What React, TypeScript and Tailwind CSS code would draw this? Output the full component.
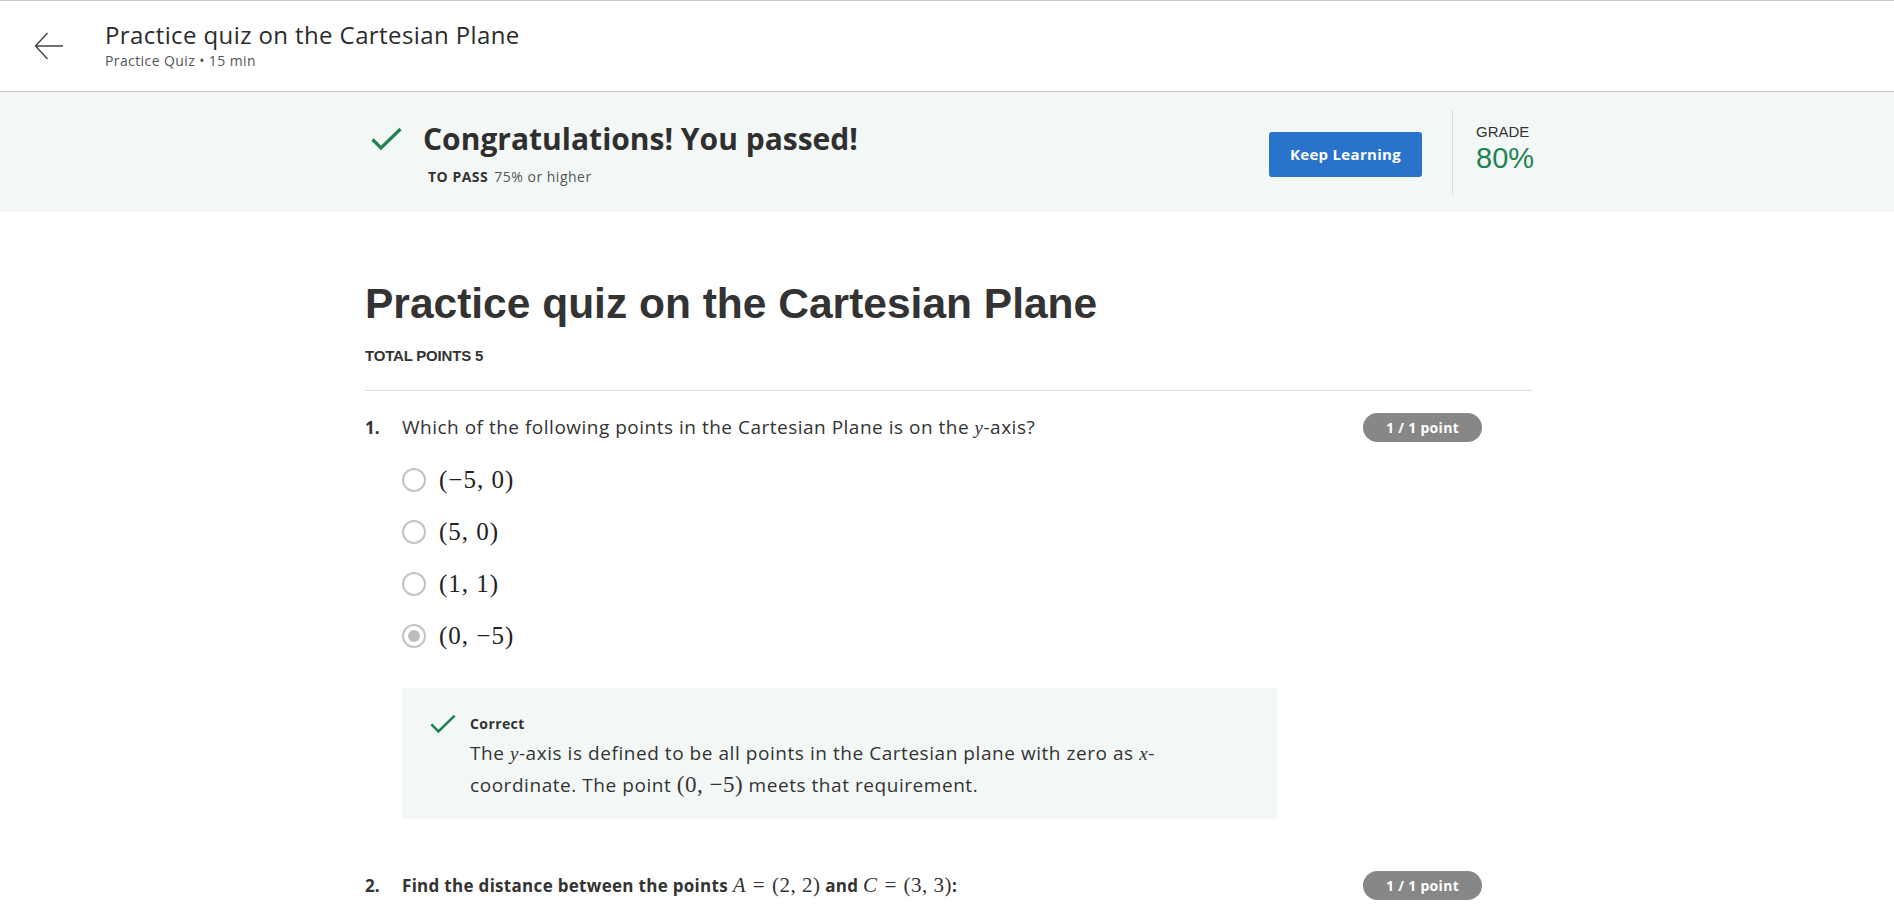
import React from "react";

const sans = { fontFamily: '"Open Sans", "Noto Sans", sans-serif' };

function Check({ className }: { className?: string }) {
  return (
    <svg viewBox="0 0 32 24" className={className} fill="none">
      <path d="M2 12.5 L10.5 21 L30 2" stroke="#1f8354" strokeWidth="3.2" />
    </svg>
  );
}

function M({ children }: { children: React.ReactNode }) {
  return (
    <span className="font-['Liberation_Serif',serif] not-italic tracking-[0.5px]">{children}</span>
  );
}

function V({ children }: { children: React.ReactNode }) {
  return <span className="font-['Liberation_Serif',serif] italic">{children}</span>;
}

function Eq() {
  return <span className="mx-[7px] font-['Liberation_Serif',serif]">=</span>;
}

function Pill() {
  return (
    <span className="mr-[50px] flex h-[29px] w-[119px] shrink-0 items-center justify-center rounded-full bg-[#878787] text-[14px] font-bold tracking-[0.3px] text-white">
      1 / 1 point
    </span>
  );
}

function Radio({ checked }: { checked?: boolean }) {
  return (
    <span className="flex h-[24px] w-[24px] items-center justify-center rounded-full border-2 border-[#c4c4c4] bg-white">
      {checked && <span className="h-[12px] w-[12px] rounded-full bg-[#bdbdbd]" />}
    </span>
  );
}

const options = [
  { label: "(−5, 0)", checked: false },
  { label: "(5, 0)", checked: false },
  { label: "(1, 1)", checked: false },
  { label: "(0, −5)", checked: true },
];

export default function App() {
  return (
    <div className="min-h-screen bg-white text-[#333]" style={sans}>
      <header className="flex h-[92px] items-center border-y border-[#c8c8c8] pl-[34px]">
        <svg viewBox="0 0 30 30" className="h-[30px] w-[30px]" fill="none">
          <path d="M29 15 H1.5 M13.5 2 L1.5 15 L13.5 28" stroke="#444" strokeWidth="1.4" />
        </svg>
        <div className="ml-[41px] -mt-[4px]">
          <h1 className="text-[24px] leading-[32px] tracking-[0.4px] text-[#2b2b2b]">
            Practice quiz on the Cartesian Plane
          </h1>
          <p className="mt-[1px] text-[14px] leading-[18px] tracking-[0.4px] text-[#555]">
            Practice Quiz • 15 min
          </p>
        </div>
      </header>

      <section className="h-[120px] bg-[#f3f8f6]">
        <div className="mx-auto flex h-full w-[1170px] items-center">
          <div className="flex flex-1 items-start self-start pt-[30px]">
            <Check className="ml-[8px] mt-[5px] h-[24px] w-[33px]" />
            <div className="ml-[20px]">
              <h2 className="text-[30px] font-bold leading-[34px] text-[#2f2f2f]">
                Congratulations! You passed!
              </h2>
              <p className="ml-[5px] mt-[10px] text-[14px] tracking-[0.5px] text-[#555]">
                <span className="mr-[6px] font-bold text-[#333]">TO PASS</span>
                75% or higher
              </p>
            </div>
          </div>
          <button className="mr-[-2px] mt-[4px] h-[45px] w-[153px] rounded-[3px] bg-[#2a73cc] text-[15px] font-bold tracking-[0.3px] text-white">
            Keep Learning
          </button>
          <div className="ml-[32px] h-[85px] w-px bg-[#d9d9d9]" />
          <div className="ml-[23px] w-[56px] -mt-[6px] font-['Liberation_Sans',Arial,sans-serif]">
            <div className="text-[15px] leading-[15px] text-[#333]">GRADE</div>
            <div className="mt-[3px] text-[29px] leading-[32px] text-[#1f8354]">80%</div>
          </div>
        </div>
      </section>

      <main className="mx-auto w-[1170px] pl-[3px]">
        <h1 className="mt-[67px] font-['Liberation_Sans',Arial,sans-serif] text-[42.5px] font-bold leading-[50px] text-[#333]">
          Practice quiz on the Cartesian Plane
        </h1>
        <p className="mt-[16px] font-['Liberation_Sans',Arial,sans-serif] text-[15px] font-bold tracking-[-0.2px] text-[#333]">
          TOTAL POINTS 5
        </p>
        <hr className="mt-[22px] border-[#ddd]" />

        <div className="mt-[22px] flex items-center">
          <span className="w-[37px] text-[17px] font-bold">1.</span>
          <p className="flex-1 text-[19px] tracking-[0.5px] text-[#333]">
            Which of the following points in the Cartesian Plane is on the <V>y</V>-axis?
          </p>
          <Pill />
        </div>

        <div className="mt-[25px] flex flex-col gap-[27px] pl-[37px]">
          {options.map((o) => (
            <label key={o.label} className="flex h-[25px] items-center">
              <Radio checked={o.checked} />
              <span className="ml-[13px] font-['Liberation_Serif',serif] text-[25px] tracking-[1px] text-[#222]">
                {o.label}
              </span>
            </label>
          ))}
        </div>

        <div className="ml-[37px] mt-[40px] w-[875px] bg-[#f3f8f6] px-[27px] pb-[18px] pt-[25px]">
          <div className="flex items-center">
            <Check className="h-[20px] w-[28px]" />
            <span className="ml-[13px] text-[14px] font-bold tracking-[0.4px] text-[#333]">Correct</span>
          </div>
          <p className="ml-[41px] mt-[4px] text-[19px] leading-[31px] tracking-[0.55px] text-[#333]">
            The <V>y</V>-axis is defined to be all points in the Cartesian plane with zero as <V>x</V>-
            <br />
            coordinate. The point <M><span className="text-[23px]">(0, −5)</span></M> meets that requirement.
          </p>
        </div>

        <div className="mt-[50px] flex items-center">
          <span className="w-[37px] text-[17px] font-bold">2.</span>
          <p className="flex-1 text-[17px] font-bold tracking-[0.3px] text-[#333]">
            Find the distance between the points{" "}
            <span className="text-[21px] font-normal">
              <V>A</V>
              <Eq />
              <M>(2, 2)</M>
            </span>{" "}
            and{" "}
            <span className="text-[21px] font-normal">
              <V>C</V>
              <Eq />
              <M>(3, 3)</M>
            </span>
            :
          </p>
          <Pill />
        </div>
      </main>
    </div>
  );
}
